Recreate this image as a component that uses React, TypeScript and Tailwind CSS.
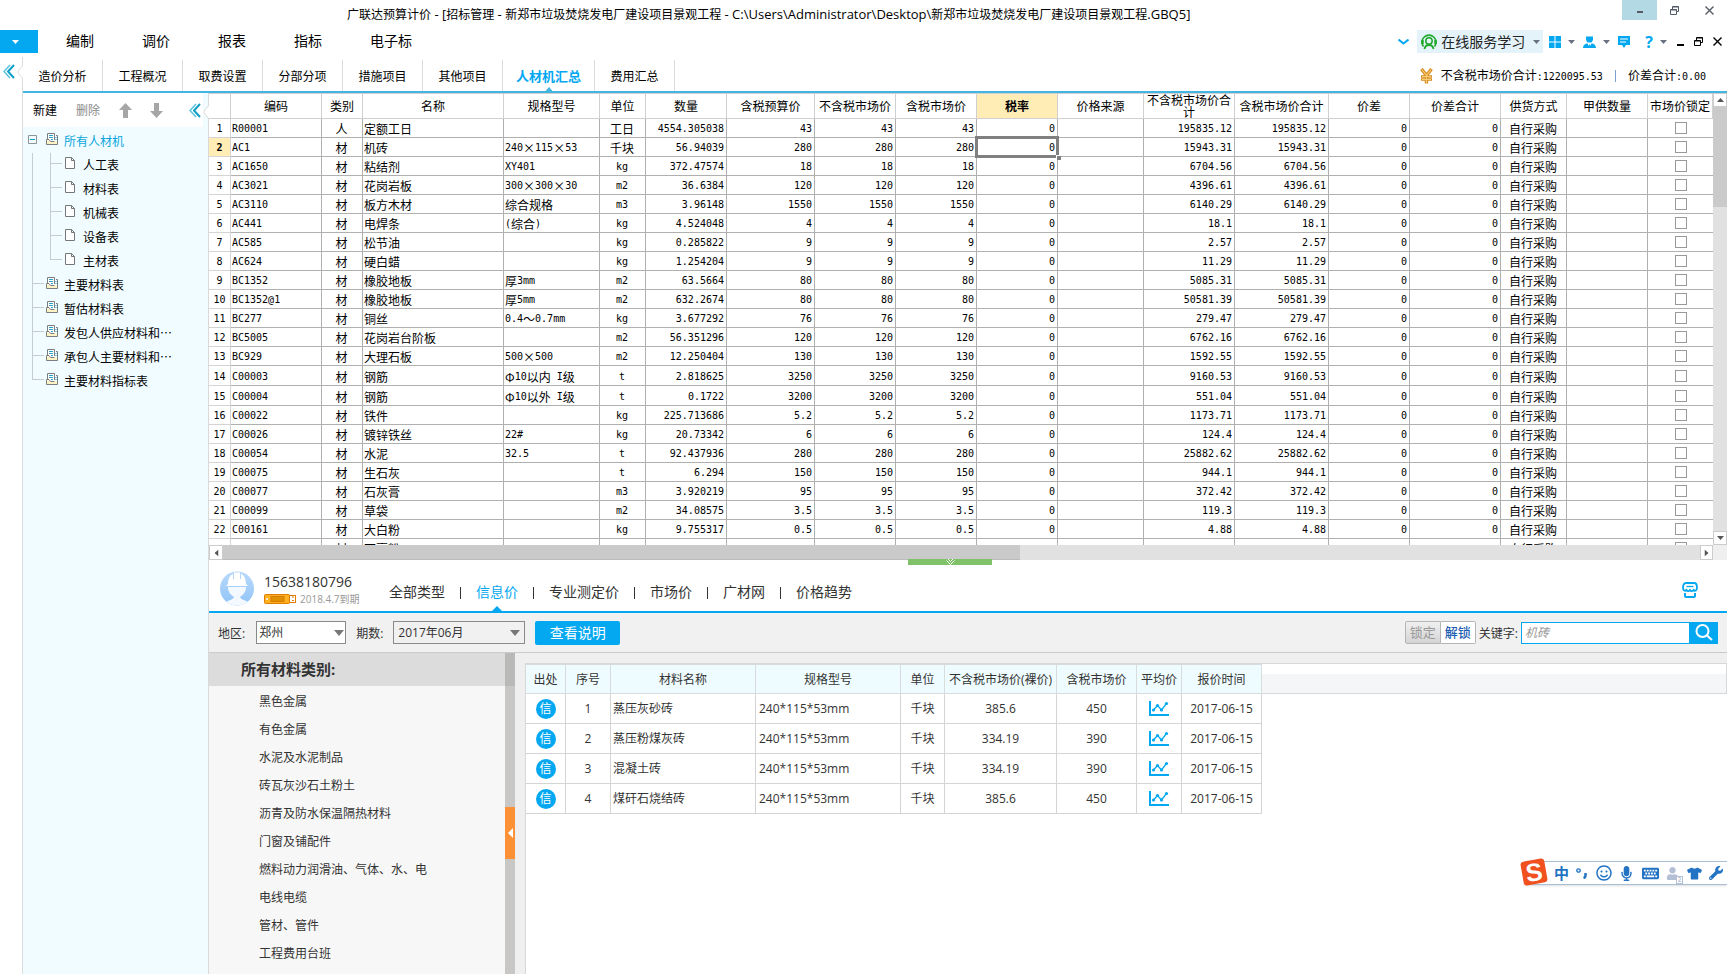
import { useState } from "react";
import { FaKeyboard, FaMicrophone, FaRegSmile, FaTshirt, FaUser, FaWrench } from "react-icons/fa";

type Row = {
  code: string;
  kind: string;
  name: string;
  spec: string;
  unit: string;
  qty: string;
  price: string;
  total: string;
};

const toRow = (line: string): Row => {
  const [code, kind, name, spec, unit, qty, price, total] = line.split("|");
  return { code, kind, name, spec, unit, qty, price, total };
};

const rows: Row[] = [
  "R00001|人|定额工日||工日|4554.305038|43|195835.12",
  "AC1|材|机砖|240×115×53|千块|56.94039|280|15943.31",
  "AC1650|材|粘结剂|XY401|kg|372.47574|18|6704.56",
  "AC3021|材|花岗岩板|300×300×30|m2|36.6384|120|4396.61",
  "AC3110|材|板方木材|综合规格|m3|3.96148|1550|6140.29",
  "AC441|材|电焊条|(综合)|kg|4.524048|4|18.1",
  "AC585|材|松节油||kg|0.285822|9|2.57",
  "AC624|材|硬白蜡||kg|1.254204|9|11.29",
  "BC1352|材|橡胶地板|厚3mm|m2|63.5664|80|5085.31",
  "BC1352@1|材|橡胶地板|厚5mm|m2|632.2674|80|50581.39",
  "BC277|材|铜丝|0.4～0.7mm|kg|3.677292|76|279.47",
  "BC5005|材|花岗岩台阶板||m2|56.351296|120|6762.16",
  "BC929|材|大理石板|500×500|m2|12.250404|130|1592.55",
  "C00003|材|钢筋|Φ10以内 I级|t|2.818625|3250|9160.53",
  "C00004|材|钢筋|Φ10以外 I级|t|0.1722|3200|551.04",
  "C00022|材|铁件||kg|225.713686|5.2|1173.71",
  "C00026|材|镀锌铁丝|22#|kg|20.73342|6|124.4",
  "C00054|材|水泥|32.5|t|92.437936|280|25882.62",
  "C00075|材|生石灰||t|6.294|150|944.1",
  "C00077|材|石灰膏||m3|3.920219|95|372.42",
  "C00099|材|草袋||m2|34.08575|3.5|119.3",
  "C00161|材|大白粉||kg|9.755317|0.5|4.88",
  "|材|石膏粉|||||",
].map(toRow);

const columns = [
  { title: "", width: 22 },
  { title: "编码", width: 91 },
  { title: "类别", width: 41 },
  { title: "名称", width: 141 },
  { title: "规格型号", width: 96 },
  { title: "单位", width: 46 },
  { title: "数量", width: 81 },
  { title: "含税预算价", width: 88 },
  { title: "不含税市场价", width: 81 },
  { title: "含税市场价", width: 81 },
  { title: "税率", width: 81 },
  { title: "价格来源", width: 86 },
  { title: "不含税市场价合计", width: 91 },
  { title: "含税市场价合计", width: 94 },
  { title: "价差", width: 81 },
  { title: "价差合计", width: 91 },
  { title: "供货方式", width: 66 },
  { title: "甲供数量", width: 81 },
  { title: "市场价锁定", width: 65 },
];

const menus = ["编制", "调价", "报表", "指标", "电子标"];
const tabs = ["造价分析", "工程概况", "取费设置", "分部分项", "措施项目", "其他项目", "人材机汇总", "费用汇总"];
const priceTabs = ["全部类型", "信息价", "专业测定价", "市场价", "广材网", "价格趋势"];

const tree = [
  { label: "所有人材机", level: 0 },
  { label: "人工表", level: 1 },
  { label: "材料表", level: 1 },
  { label: "机械表", level: 1 },
  { label: "设备表", level: 1 },
  { label: "主材表", level: 1 },
  { label: "主要材料表", level: 0 },
  { label: "暂估材料表", level: 0 },
  { label: "发包人供应材料和⋯", level: 0 },
  { label: "承包人主要材料和⋯", level: 0 },
  { label: "主要材料指标表", level: 0 },
];

const categories = [
  "黑色金属",
  "有色金属",
  "水泥及水泥制品",
  "砖瓦灰沙石土粉土",
  "沥青及防水保温隔热材料",
  "门窗及铺配件",
  "燃料动力润滑油、气体、水、电",
  "电线电缆",
  "管材、管件",
  "工程费用台班",
];

const quoteColumns = [
  { title: "出处", width: 40 },
  { title: "序号", width: 45 },
  { title: "材料名称", width: 145 },
  { title: "规格型号", width: 145 },
  { title: "单位", width: 44 },
  { title: "不含税市场价(裸价)", width: 112 },
  { title: "含税市场价", width: 80 },
  { title: "平均价", width: 45 },
  { title: "报价时间", width: 80 },
];

const quotes = [
  { name: "蒸压灰砂砖", net: "385.6", gross: "450" },
  { name: "蒸压粉煤灰砖", net: "334.19", gross: "390" },
  { name: "混凝土砖", net: "334.19", gross: "390" },
  { name: "煤矸石烧结砖", net: "385.6", gross: "450" },
];

// Latin runs get their own face and size next to full-width Chinese
function Mixed({ text, latin = "font-['DejaVu_Sans_Mono',monospace] text-[10px]" }: { text: string; latin?: string }) {
  const parts = text.match(/[\x20-\x7e]+|[^\x20-\x7e]+/g) ?? [];
  return (
    <>
      {parts.map((part, i) => (
        <span key={i} className={/^[\x20-\x7e]/.test(part) ? latin : undefined}>
          {part}
        </span>
      ))}
    </>
  );
}

function Caret({ className = "" }: { className?: string }) {
  return (
    <svg width="7" height="4" viewBox="0 0 7 4" fill="currentColor" className={className}>
      <path d="M0 0H7L3.5 4Z" />
    </svg>
  );
}

function DoubleLeft() {
  return (
    <svg width="12" height="15" viewBox="0 0 12 15" fill="none" strokeWidth="1.5">
      <path d="M7 1L1 7.5L7 14" stroke="#5cc4e2" />
      <path d="M11 1L5 7.5L11 14" stroke="#0e9fc8" strokeWidth="2" />
    </svg>
  );
}

function RestoreIcon() {
  return (
    <svg width="9" height="9" viewBox="0 0 9 9" fill="none" stroke="currentColor">
      <path d="M0.5 3.5H6.5V8.5H0.5ZM2.5 3.5V0.5H8.5V5.5H6.5" />
      <path d="M0.5 4H6.5M2.5 1H8.5" />
    </svg>
  );
}

function CloseIcon() {
  return (
    <svg width="9" height="9" viewBox="0 0 9 9" fill="none" stroke="currentColor" strokeWidth="1.4">
      <path d="M0.5 0.5L8.5 8.5M8.5 0.5L0.5 8.5" />
    </svg>
  );
}

function FolderIcon() {
  return (
    <svg width="12" height="12" viewBox="0 0 12 12" fill="none">
      <path d="M1.5 0.5H8.5V8.5H1.5Z" fill="#fff" />
      <path d="M0.5 7.5H3.5L4.5 8.5H11.5V11.5H0.5Z" fill="#fff3c4" />
      <path d="M1.5 6V0.5H8.5V7M10 2.5H11.5V11.5H0.5V6.5H3L4.5 8.5H8.5" stroke="#7b7f84" />
      <path d="M3 2.5H7M3 4.5H7M5 6.5H7" stroke="#2f9fd0" />
      <path d="M10 4V8" stroke="#2f9fd0" strokeDasharray="1 1" />
    </svg>
  );
}

function FileIcon() {
  return (
    <svg width="10" height="12" viewBox="0 0 10 12" fill="none">
      <path d="M0.5 0.5H6.5L9.5 3.5V11.5H0.5Z" fill="#fff" stroke="#777" />
      <path d="M6.5 0.5V3.5H9.5" stroke="#777" />
    </svg>
  );
}

function ChartIcon() {
  return (
    <svg width="20" height="15" viewBox="0 0 20 15" fill="none" stroke="#04a8f1">
      <path d="M1 0V14H20" strokeWidth="2" />
      <path d="M4.5 9L8.5 4.5L12.5 9L17.500 2.5" strokeWidth="1.3" />
      <g fill="#04a8f1" stroke="none">
        <circle cx="4.5" cy="9" r="1.6" />
        <circle cx="8.5" cy="4.5" r="1.6" />
        <circle cx="12.5" cy="9" r="1.6" />
        <circle cx="17.5" cy="2.5" r="1.6" />
      </g>
    </svg>
  );
}

function TitleBar() {
  return (
    <header className="flex h-[30px] shrink-0 items-start justify-between pl-[347px] font-['Open_Sans','Noto_Sans_CJK_SC',sans-serif]">
      <h1 className="truncate text-xs leading-7">
        <Mixed
          text="广联达预算计价 - [招标管理 - 新郑市垃圾焚烧发电厂建设项目景观工程 - C:\Users\Administrator\Desktop\新郑市垃圾焚烧发电厂建设项目景观工程.GBQ5]"
          latin="text-[13px]"
        />
      </h1>
      <div className="flex shrink-0 text-[#555b66]">
        <button aria-label="最小化" className="flex h-5 w-[35px] items-center justify-center bg-[#b3d9e5]">
          <span className="mt-1 h-0.5 w-1.5 bg-current" />
        </button>
        <button aria-label="还原" className="flex h-5 w-[35px] items-center justify-center">
          <RestoreIcon />
        </button>
        <button aria-label="关闭" className="flex h-5 w-[35px] items-center justify-center">
          <CloseIcon />
        </button>
      </div>
    </header>
  );
}

function MenuBar() {
  return (
    <div className="flex h-[27px] shrink-0 items-start font-['Open_Sans','Noto_Sans_CJK_SC',sans-serif]">
      <button aria-label="主菜单" className="flex h-[23px] w-[38px] items-center justify-center bg-[#04a8f1] pr-2 text-white">
        <Caret />
      </button>
      <nav className="ml-1 flex">
        {menus.map((menu) => (
          <button key={menu} className="px-6 text-sm leading-[22px]">
            {menu}
          </button>
        ))}
      </nav>

      <div className="ml-auto flex h-[23px] items-center pr-[5px] text-[#04a8f1]">
        <button aria-label="展开" className="mr-2">
          <svg width="11" height="6" viewBox="0 0 11 6" fill="none" stroke="currentColor" strokeWidth="2">
            <path d="M0.5 0.5L5.5 4.5L10.5 0.5" />
          </svg>
        </button>
        <button className="flex h-[23px] w-[126px] items-center bg-[#e4f3f9] pl-1 text-sm leading-[22px] text-[#222]">
          <svg width="16" height="16" viewBox="0 0 16 16" fill="none" stroke="#1fa82a">
            <path d="M2.500 12.500A7 7 0 1 1 13.500 12.500" strokeWidth="1.6" />
            <path d="M1.500 6V10M14.500 6V10" strokeWidth="2.4" />
            <circle cx="8" cy="7" r="3.2" strokeWidth="1.5" />
            <path d="M3.5 15C4 12 6 11 8 11S12 12 12.5 15" strokeWidth="1.8" />
          </svg>
          <span className="ml-1">在线服务学习</span>
          <Caret className="ml-2 text-gray-500" />
        </button>
        <button aria-label="布局" className="ml-1.5 flex items-center gap-[7px]">
          <svg width="12" height="12" viewBox="0 0 12 12" fill="currentColor">
            <path d="M0 0H5.5V5.5H0ZM6.5 0H12V5.5H6.5ZM0 6.5H5.5V12H0ZM6.5 6.5H12V12H6.5Z" />
          </svg>
          <Caret className="text-gray-500" />
        </button>
        <button aria-label="用户" className="ml-2 flex items-center gap-[7px]">
          <svg width="13" height="12" viewBox="0 0 13 12" fill="currentColor">
            <path d="M3 0.5H10V4L8.5 6.5H4.5L3 4ZM0 12C0 9 2 7.5 4.5 7.5L6 10L6.5 7.5L7 10L8.5 7.5C11 7.5 13 9 13 12Z" />
          </svg>
          <Caret className="text-gray-500" />
        </button>
        <button aria-label="消息" className="ml-2">
          <svg width="12" height="12" viewBox="0 0 12 12" fill="currentColor">
            <path d="M0 0H12V9H8L6 12L4 9H0Z" />
            <path d="M2 3H10M2 6H8" stroke="#fff" />
          </svg>
        </button>
        <button aria-label="帮助" className="ml-[15px] flex items-center gap-[7px] text-base leading-5 font-bold">
          ?
          <Caret className="text-gray-500" />
        </button>
        <div className="ml-2.5 flex items-center gap-2.5 text-black">
          <button aria-label="最小化文档" className="mt-1.5 h-0.5 w-[7px] bg-current" />
          <button aria-label="还原文档">
            <RestoreIcon />
          </button>
          <button aria-label="关闭文档">
            <CloseIcon />
          </button>
        </div>
      </div>
    </div>
  );
}

function TabBar({ active, onSelect }: { active: string; onSelect: (tab: string) => void }) {
  return (
    <div className="flex h-9 shrink-0 items-start border-b-2 border-[#43b5e0]">
      <nav className="mt-[3px] flex h-[31px]">
        {tabs.map((tab) => (
          <button
            key={tab}
            onClick={() => onSelect(tab)}
            className={`relative h-full border-r border-[#dcdcdc] ${
              tab === active ? "w-[92px] text-[13px] font-bold text-[#04a8f1]" : "w-20"
            }`}
          >
            {tab}
            {tab === active && (
              <Caret className="absolute bottom-0 left-1/2 -translate-x-1/2 rotate-180 text-[#43b5e0]" />
            )}
          </button>
        ))}
      </nav>
      <div className="ml-auto flex items-center pt-2.5 pr-[21px] leading-4">
        <svg width="13" height="16" viewBox="0 0 13 16" fill="none" stroke="#d98a1f">
          <path d="M1.5 1L6.5 7.5L11.5 1M6.5 7V15.5" strokeWidth="3.4" />
          <path d="M1 8.5H12M1 11.5H12" strokeWidth="2.4" />
          <path d="M2 1.5L6.5 7.500L11 1.500M6.5 7V15M2 8.500H11M2 11.500H11" stroke="#f9cd72" strokeWidth="1.2" />
        </svg>
        <span className="ml-2">
          <Mixed text="不含税市场价合计:1220095.53" />
        </span>
        <span className="mx-3 h-3 w-px bg-[#7aa0cc]" />
        <span>
          <Mixed text="价差合计:0.00" />
        </span>
      </div>
    </div>
  );
}

function Sidebar() {
  return (
    <aside className="relative w-[186px] shrink-0 border-r border-[#d9d9d9] bg-[#f0fcff]">
      <div className="mr-[5px] flex h-[34px] items-center bg-white pl-2.5">
        <button>新建</button>
        <button className="ml-[19px] text-[#8a8a8a]">删除</button>
        <button aria-label="上移" className="ml-[19px]">
          <svg width="13" height="15" viewBox="0 0 13 15" fill="#a6a6a6">
            <path d="M6.5 0L13 7H9V15H4V7H0Z" />
          </svg>
        </button>
        <button aria-label="下移" className="ml-[18px]">
          <svg width="13" height="15" viewBox="0 0 13 15" fill="#a6a6a6">
            <path d="M6.5 15L0 8H4V0H9V8H13Z" />
          </svg>
        </button>
        <button aria-label="收起" className="ml-auto pr-0.5">
          <DoubleLeft />
        </button>
      </div>
      <svg width="6" height="14" viewBox="0 0 6 14" className="absolute top-3 -right-px">
        <path d="M6 0L0.5 7L6 14Z" fill="#fff" />
        <path d="M6 0L0.5 7L6 14" fill="none" stroke="#d9d9d9" />
      </svg>
      <ul className="pt-0.5">
        {tree.map(({ label, level }, i) => (
          <li key={label} className={`relative flex h-6 items-center ${level ? "pl-[42px]" : "pl-[23px]"}`}>
            {i > 0 && (
              <span className={`absolute top-0 left-[9px] w-px bg-[#c4cccf] ${i === tree.length - 1 ? "h-2.5" : "h-6"}`} />
            )}
            {i > 0 && level === 0 && <span className="absolute top-2.5 left-[9px] h-px w-3 bg-[#c4cccf]" />}
            {level === 1 && (
              <>
                <span className={`absolute top-0 left-[27px] w-px bg-[#c4cccf] ${i === 5 ? "h-2.5" : "h-6"}`} />
                <span className="absolute top-2.5 left-[27px] h-px w-3 bg-[#c4cccf]" />
              </>
            )}
            {i === 0 && (
              <button aria-label="折叠" className="absolute top-1.5 left-[5px]">
                <svg width="9" height="9" viewBox="0 0 9 9" fill="none">
                  <path d="M0.5 0.5H8.5V8.5H0.5Z" stroke="#8a9499" />
                  <path d="M2 4.5H7" stroke="#0e9fc8" />
                </svg>
              </button>
            )}
            <span className="mb-1">{level ? <FileIcon /> : <FolderIcon />}</span>
            <a href="#" className={`${level ? "ml-2" : "ml-1.5"} ${i === 0 ? "text-[#0aa5dc]" : ""}`}>
              {label}
            </a>
          </li>
        ))}
      </ul>
    </aside>
  );
}

function Cell({ text, align = "" }: { text: string; align?: string }) {
  return (
    <td className="border-r border-b border-[#b0b0b0] p-0">
      <div className={`flex h-[18px] items-center overflow-hidden pt-0.5 pr-0.5 pl-px whitespace-pre ${align}`}>
        <Mixed text={text} />
      </div>
    </td>
  );
}

function MaterialGrid() {
  return (
    <section className="flex min-h-0 flex-[467_1_0%] flex-col">
      <div className="flex min-h-0 flex-1">
        <div className="min-w-0 flex-1 overflow-hidden">
          <table className="w-full table-fixed border-separate border-spacing-0 border-t border-[#d0d0d0]">
            <colgroup>
              {columns.map((col) => (
                <col key={col.title} style={{ width: col.width }} />
              ))}
            </colgroup>
            <thead>
              <tr>
                {columns.map((col) => (
                  <th
                    key={col.title}
                    className={`border-r border-b border-[#d0d0d0] p-0 ${
                      col.title === "税率" ? "bg-[#ffedb5] font-bold" : "font-normal"
                    }`}
                  >
                    <div className="flex h-6 items-center justify-center text-center leading-3 break-all">
                      {col.title}
                    </div>
                  </th>
                ))}
              </tr>
            </thead>
            <tbody>
              {rows.map((row, i) => {
                const current = i === 1;
                const empty = row.code === "";
                const zero = empty ? "" : "0";
                return (
                  <tr key={i} className={i === 13 || i === 14 ? "h-5" : "h-[19px]"}>
                    <th
                      scope="row"
                      className={`border-r border-b border-[#d4d4d4] p-0 font-['DejaVu_Sans_Mono',monospace] text-[10px] ${
                        current ? "bg-[#ffedb5] font-bold" : "font-normal"
                      }`}
                    >
                      <div className="h-[18px] pt-0.5 leading-4">{empty ? "" : i + 1}</div>
                    </th>
                    <Cell text={row.code} />
                    <Cell text={row.kind} align="justify-center" />
                    <Cell text={row.name} />
                    <Cell text={row.spec} />
                    <Cell text={row.unit} align="justify-center" />
                    <Cell text={row.qty} align="justify-end" />
                    <Cell text={row.price} align="justify-end" />
                    <Cell text={row.price} align="justify-end" />
                    <Cell text={row.price} align="justify-end" />
                    {current ? (
                      <td className="relative border-r border-b border-[#b0b0b0] p-0">
                        <div className="flex h-[18px] items-center justify-end pt-0.5 pr-0.5">
                          <Mixed text="0" />
                        </div>
                        <span className="absolute -inset-0.5 border-[3px] border-[#808080]" />
                        <span className="absolute -right-1 -bottom-1 size-[5px] border-t border-l border-white bg-[#808080]" />
                      </td>
                    ) : (
                      <Cell text={zero} align="justify-end" />
                    )}
                    <Cell text="" />
                    <Cell text={row.total} align="justify-end" />
                    <Cell text={row.total} align="justify-end" />
                    <Cell text={zero} align="justify-end" />
                    <Cell text={zero} align="justify-end" />
                    <Cell text="自行采购" align="justify-center" />
                    <Cell text="" />
                    <td className="border-b border-[#b0b0b0] p-0">
                      <input
                        type="checkbox"
                        aria-label={`锁定 ${row.name}`}
                        className="mx-auto block size-3 appearance-none border border-[#999] bg-white checked:bg-[#04a8f1]"
                      />
                    </td>
                  </tr>
                );
              })}
            </tbody>
          </table>
        </div>
        <div className="flex w-3.5 shrink-0 flex-col bg-[#e1e1e1] text-[#555]">
          <button aria-label="向上滚动" className="flex h-3.5 items-center justify-center border border-[#ccc] bg-white">
            <Caret className="rotate-180" />
          </button>
          <div className="h-[100px] bg-[#cacaca]" />
          <button aria-label="向下滚动" className="mt-auto flex h-3.5 items-center justify-center border border-[#ccc] bg-white">
            <Caret />
          </button>
        </div>
      </div>
      <div className="relative flex h-[15px] shrink-0 bg-[#e1e1e1] text-[#555]">
        <button aria-label="向左滚动" className="flex w-3.5 items-center justify-center border border-[#ccc] bg-white">
          <Caret className="rotate-90" />
        </button>
        <div className="w-21/40 border-b border-[#bbb] bg-[#cacaca]" />
        <button aria-label="向右滚动" className="ml-auto flex w-[13px] items-center justify-center border border-[#ccc] bg-white">
          <Caret className="-rotate-90" />
        </button>
        <div className="w-3.5 bg-[#efefef]" />
        <button
          aria-label="收起面板"
          className="absolute top-3.5 left-[699px] flex h-1.5 w-[84px] items-center justify-center bg-[#80c26a] text-white"
        >
          <svg width="9" height="6" viewBox="0 0 9 6" fill="none" stroke="currentColor">
            <path d="M2 0L4.5 2.5L7 0M0.5 1.5L4.5 5.5L8.5 1.5" />
          </svg>
        </button>
      </div>
    </section>
  );
}

function PriceHeader({ active, onSelect }: { active: string; onSelect: (tab: string) => void }) {
  return (
    <div className="flex h-[53px] shrink-0 items-end border-b-2 border-[#04a8f1] pl-[11px]">
      <svg width="34" height="36" viewBox="0 0 34 36" className="mb-1">
        <defs>
          <clipPath id="face">
            <circle cx="17" cy="17.5" r="17" />
          </clipPath>
          <linearGradient id="sky" x1="0" y1="0" x2="0" y2="1">
            <stop offset="0" stopColor="#b9d9fb" />
            <stop offset="1" stopColor="#8fc3f7" />
          </linearGradient>
        </defs>
        <g clipPath="url(#face)">
          <rect width="34" height="36" fill="url(#sky)" />
          <path d="M8 13C8 8 10 4 13 3V8H14V1.5H20V8H21V3C24 4 26 8 26 13L28 15H6Z" fill="#fff" />
          <path d="M8 16H26C26 21 23 24 20 26C21 29 26 29 29 32V36H5V32C8 29 13 29 14 26C11 24 8 21 8 16Z" fill="#f4f9ff" />
        </g>
      </svg>
      <div className="mb-[5px] ml-2.5 w-[125px] text-[#333]">
        <div className="text-sm leading-5">15638180796</div>
        <div className="flex items-center text-[10px] leading-3.5 whitespace-nowrap text-[#999]">
          <svg width="32" height="10" viewBox="0 0 32 10" className="mr-1">
            <rect x="0.5" y="0.5" width="25" height="9" rx="1" fill="#ffb11f" stroke="#e07b00" />
            <rect x="7" y="2.5" width="13" height="5" fill="#e09000" stroke="#d97a00" />
            <path d="M2 5H4" stroke="#fff" strokeWidth="1.5" />
            <rect x="25.5" y="1.5" width="6" height="7" fill="#fff" stroke="#e07b00" />
            <path d="M28 3H30M28 6.5H30" stroke="#e07b00" />
          </svg>
          2018.4.7到期
        </div>
      </div>
      <nav className="flex h-[38px] items-start">
        {priceTabs.map((tab, i) => (
          <div key={tab} className="flex h-full items-start">
            {i > 0 && <span className="mx-[15px] mt-3.5 h-3 w-px bg-[#333]" />}
            <button
              onClick={() => onSelect(tab)}
              className={`relative h-full text-sm leading-[38px] ${tab === active ? "text-[#04a8f1]" : "text-[#333]"}`}
            >
              {tab}
              {tab === active && (
                <svg width="10" height="5" viewBox="0 0 10 5" className="absolute bottom-0 left-1/2 -translate-x-1/2">
                  <path d="M0 5L5 0L10 5Z" fill="#04a8f1" />
                </svg>
              )}
            </button>
          </div>
        ))}
      </nav>
      <button aria-label="商城" className="mr-[29px] mb-[13px] ml-auto">
        <svg width="16" height="16" viewBox="0 0 16 16" fill="none" stroke="#04a8f1" strokeWidth="2">
          <path d="M4 1H12C14 1 15 3 15 5.5C15 8.500 13 9.500 11.5 8C10.5 9.500 9 9.500 8 8C7 9.500 5.5 9.500 4.5 8C3 9.500 1 8.500 1 5.5C1 3 2 1 4 1Z" strokeWidth="1.8" />
          <path d="M4.5 4.5H11.5" strokeWidth="1.3" />
          <path d="M3 11V14Q3 15 4 15H12Q13 15 13 14V11" />
        </svg>
      </button>
    </div>
  );
}

function FilterBar() {
  return (
    <div className="flex h-10 shrink-0 items-center border-b border-[#cbcbcb] bg-[#f1f1f1] px-[9px] text-[#333]">
      <label htmlFor="region" className="pt-0.5">
        地区:
      </label>
      <div className="relative ml-[11px]">
        <select id="region" className="h-[23px] w-[90px] appearance-none border border-[#8a8a8a] bg-white px-0.5 leading-5">
          <option>郑州</option>
        </select>
        <svg width="10" height="6" viewBox="0 0 10 6" fill="#777" className="pointer-events-none absolute top-[9px] right-0.5">
          <path d="M0 0H10L5 6Z" />
        </svg>
      </div>
      <label htmlFor="period" className="ml-2.5 pt-0.5">
        期数:
      </label>
      <div className="relative ml-2.5">
        <select id="period" className="h-[23px] w-[132px] appearance-none border border-[#8a8a8a] bg-[#f1f1f1] px-1 leading-5">
          <option>2017年06月</option>
        </select>
        <svg width="10" height="6" viewBox="0 0 10 6" fill="#777" className="pointer-events-none absolute top-[9px] right-[5px]">
          <path d="M0 0H10L5 6Z" />
        </svg>
      </div>
      <button className="ml-2.5 h-6 w-[85px] rounded-xs bg-[#04a8f1] text-sm leading-6 text-white">查看说明</button>

      <div className="ml-auto flex text-[13px] leading-[21px]">
        <button className="w-9 rounded-l-xs border border-[#b5b5b5] bg-linear-to-b from-[#f0f0f0] to-[#d4d4d4] text-[#999]">锁定</button>
        <button className="w-[35px] rounded-r-xs border border-l-0 border-[#b5b5b5] bg-white font-medium text-[#1f5fb0]">解锁</button>
      </div>
      <label htmlFor="keyword" className="ml-[3px] pt-0.5">
        关键字:
      </label>
      <input
        id="keyword"
        placeholder="机砖"
        className="ml-[3px] h-[22px] w-[169px] border border-[#04a8f1] bg-white px-[3px] italic outline-none placeholder:text-[#999]"
      />
      <button aria-label="搜索" className="flex h-[22px] w-7 items-center justify-center bg-[#04a8f1]">
        <svg width="18" height="17" viewBox="0 0 18 17" fill="none" stroke="#fff" strokeWidth="2">
          <circle cx="7.5" cy="7" r="6" />
          <path d="M12 11.5L17 16" />
        </svg>
      </button>
    </div>
  );
}

function QuoteTable() {
  return (
    <div className="flex min-w-0 flex-1 items-start border-t border-l border-[#d8d8d8] bg-white">
      <table className="w-[736px] shrink-0 table-fixed border-separate border-spacing-0 text-[#333]">
        <colgroup>
          {quoteColumns.map((col) => (
            <col key={col.title} style={{ width: col.width }} />
          ))}
        </colgroup>
        <thead>
          <tr className="h-[30px]">
            {quoteColumns.map((col) => (
              <th key={col.title} className="border-t border-r border-b border-[#d8dcdd] bg-[#effcff] p-0 pt-px font-normal whitespace-nowrap">
                {col.title}
              </th>
            ))}
          </tr>
        </thead>
        <tbody>
          {quotes.map((quote, i) => (
            <tr key={quote.name} className="h-[30px] text-center *:border-r *:border-b *:border-[#d4d4d4] *:p-0">
              <td>
                <span className="mx-auto block size-5 rounded-full bg-[#04a8f1] text-xs leading-5 text-white">信</span>
              </td>
              <td>{i + 1}</td>
              <td>
                <div className="px-0.5 text-left">{quote.name}</div>
              </td>
              <td>
                <div className="px-[3px] text-left">240*115*53mm</div>
              </td>
              <td>千块</td>
              <td>{quote.net}</td>
              <td>{quote.gross}</td>
              <td>
                <button aria-label="价格走势" className="block w-full pl-3">
                  <ChartIcon />
                </button>
              </td>
              <td>2017-06-15</td>
            </tr>
          ))}
        </tbody>
      </table>
      <div className="h-[30px] flex-1 border-r border-b border-[#d8d8d8] pt-2.5">
        <div className="h-full bg-[#f5f6f8]" />
      </div>
    </div>
  );
}

function PricePanel() {
  const [active, setActive] = useState("信息价");

  return (
    <section className="flex min-h-0 flex-[414_1_0%] flex-col font-['Open_Sans','Noto_Sans_CJK_SC',sans-serif]">
      <PriceHeader active={active} onSelect={setActive} />
      <FilterBar />
      <div className="flex min-h-0 flex-1 bg-[#efefef]">
        <div className="w-[296px] shrink-0 overflow-hidden bg-[#f7f7f7] text-[#333]">
          <h2 className="bg-[#dcdcdc] pl-8 text-[15px] leading-[33px] font-bold">所有材料类别:</h2>
          <ul className="pt-0.5">
            {categories.map((category) => (
              <li key={category} className="pl-[50px] leading-7">
                <a href="#">{category}</a>
              </li>
            ))}
          </ul>
        </div>
        <div className="flex w-2.5 shrink-0 flex-col bg-[#c8c7c6]">
          <div className="h-[33px] bg-[#b9b9b7]" />
          <button aria-label="收起分类" className="mt-[121px] flex h-[52px] items-center justify-center bg-[#fe9136] text-white">
            <svg width="5" height="10" viewBox="0 0 5 10" fill="currentColor">
              <path d="M5 0V10L0 5Z" />
            </svg>
          </button>
        </div>
        <div className="flex min-w-0 flex-1 pt-2.5 pl-2.5">
          <QuoteTable />
        </div>
      </div>
    </section>
  );
}

function ImeToolbar() {
  return (
    <div className="absolute right-0 bottom-[89px] flex h-6 w-[202px] items-center justify-between border border-r-0 border-[#a9c0d4] bg-white pr-1 pl-7 text-[#2373c4] shadow-sm">
      <svg width="28" height="28" viewBox="0 0 28 28" className="absolute -top-1 -left-1.5">
        <rect x="2" y="2" width="24" height="24" rx="3" fill="#f1501f" transform="rotate(-10 14 14)" />
        <text
          x="14"
          y="23"
          textAnchor="middle"
          fill="#fff"
          transform="rotate(-8 14 14)"
          className="font-['Liberation_Sans',sans-serif] text-[25px] font-bold"
        >
          S
        </text>
      </svg>
      <button className="text-[15px] leading-5 font-bold">中</button>
      <button aria-label="标点" className="w-3">
        <svg width="12" height="12" viewBox="0 0 12 12" fill="none" stroke="currentColor">
          <circle cx="2.5" cy="3.5" r="1.7" strokeWidth="1.3" />
          <path d="M9.5 6V8.5Q9.5 10.5 7.5 11" strokeWidth="2.5" />
        </svg>
      </button>
      <button aria-label="表情">
        <FaRegSmile size={16} />
      </button>
      <button aria-label="语音">
        <FaMicrophone size={15} />
      </button>
      <button aria-label="键盘">
        <FaKeyboard size={17} />
      </button>
      <button aria-label="账户" className="relative text-[#b4bfd6]">
        <FaUser size={13} />
        <span className="absolute -right-1 -bottom-1 h-2 w-[7px] border border-[#b4bfd6] bg-white text-center text-[6px] leading-[6px] font-bold">
          2
        </span>
      </button>
      <button aria-label="皮肤">
        <FaTshirt size={15} />
      </button>
      <button aria-label="工具">
        <FaWrench size={14} />
      </button>
    </div>
  );
}

export default function App() {
  const [tab, setTab] = useState("人材机汇总");

  return (
    <div className="relative flex h-screen flex-col overflow-hidden bg-white font-['Noto_Sans_CJK_SC',sans-serif] text-xs text-black">
      <TitleBar />
      <MenuBar />
      <div className="flex min-h-0 flex-1">
        <div className="relative w-[23px] shrink-0 border-r border-[#dcdcdc] pt-[7px] pl-[3px]">
          <button aria-label="收起导航" className="block">
            <DoubleLeft />
          </button>
          <svg width="6" height="14" viewBox="0 0 6 14" className="absolute top-2 -right-px">
            <path d="M6 0L0.5 7L6 14Z" fill="#fff" />
            <path d="M6 0L0.5 7L6 14" fill="none" stroke="#dcdcdc" />
          </svg>
        </div>
        <div className="flex min-w-0 flex-1 flex-col">
          <TabBar active={tab} onSelect={setTab} />
          <div className="flex min-h-0 flex-1">
            <Sidebar />
            <main className="flex min-w-0 flex-1 flex-col">
              <MaterialGrid />
              <PricePanel />
            </main>
          </div>
        </div>
      </div>
      <ImeToolbar />
    </div>
  );
}
